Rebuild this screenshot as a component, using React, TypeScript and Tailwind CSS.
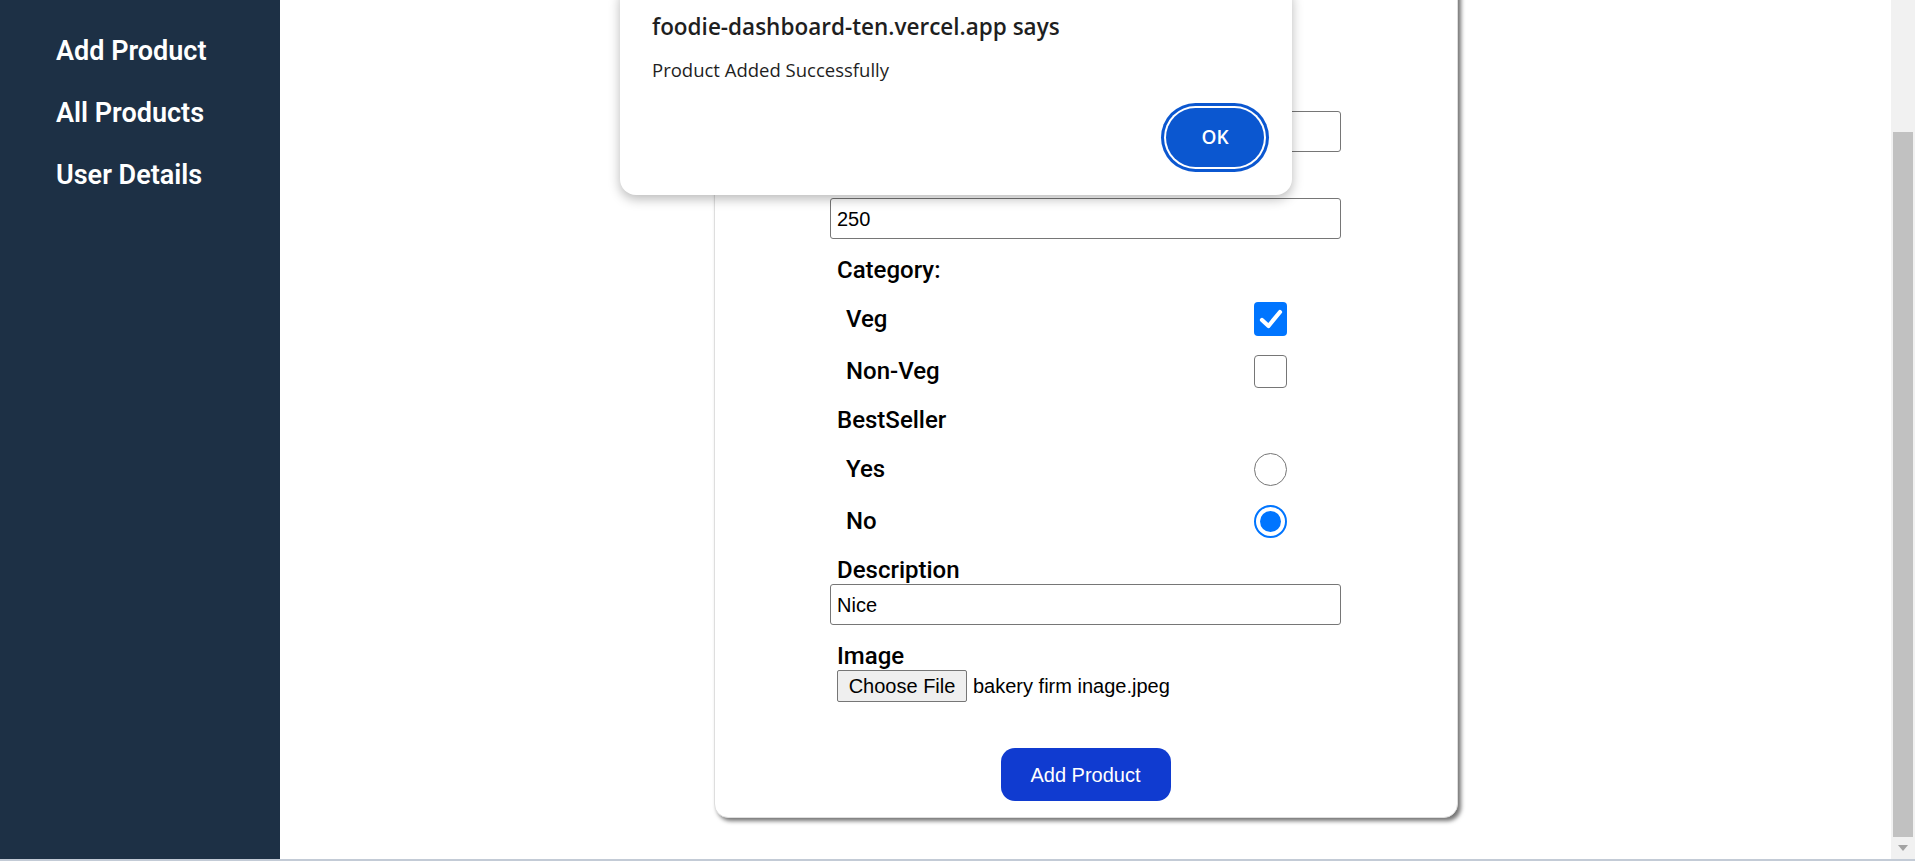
import React from "react";

const labelFont = { fontFamily: "Roboto, 'Liberation Sans', sans-serif" };

function Label({ children, className = "" }: { children: React.ReactNode; className?: string }) {
  return (
    <div
      className={`h-[28px] leading-[28px] pl-[7px] text-[24px] font-medium text-black font-['Roboto',sans-serif] ${className}`}
    >
      {children}
    </div>
  );
}

function TextInput({ value }: { value: string }) {
  return (
    <div className="h-[41px] w-full border border-[#767676] rounded-[3px] bg-white flex items-center pl-[6px] text-[20px] text-black font-['Liberation_Sans',Arial,sans-serif]">
      {value}
    </div>
  );
}

function Checkbox({ checked }: { checked: boolean }) {
  if (checked) {
    return (
      <div className="w-[33px] h-[34px] rounded-[4px] bg-[#0075ff] flex items-center justify-center">
        <svg width="24" height="22" viewBox="0 0 24 22">
          <path d="M3 12 L9.5 18 L21 4" fill="none" stroke="white" strokeWidth="4.2" strokeLinecap="round" strokeLinejoin="round" />
        </svg>
      </div>
    );
  }
  return <div className="w-[33px] h-[33px] rounded-[4px] border-[1.5px] border-[#767676] bg-white" />;
}

function Radio({ checked }: { checked: boolean }) {
  if (checked) {
    return (
      <div className="w-[33px] h-[33px] rounded-full border-2 border-[#0075ff] bg-white flex items-center justify-center">
        <div className="w-[21px] h-[21px] rounded-full bg-[#0075ff]" />
      </div>
    );
  }
  return <div className="w-[33px] h-[33px] rounded-full border-[1.5px] border-[#767676] bg-white" />;
}

function OptionRow({ label, children, className = "" }: { label: string; children: React.ReactNode; className?: string }) {
  return (
    <div className={`h-[34px] flex items-center justify-between pl-[16px] pr-[54px] ${className}`}>
      <span className="text-[24px] font-medium text-black font-['Roboto',sans-serif]">{label}</span>
      {children}
    </div>
  );
}

export default function App() {
  return (
    <div className="relative w-[1915px] h-[861px] overflow-hidden flex flex-col bg-white" style={labelFont}>
      <div className="flex flex-1 min-h-0">
        <aside className="w-[280px] shrink-0 bg-[#1d3045]">
          <ul className="pt-[20px]">
            {["Add Product", "All Products", "User Details"].map((t) => (
              <li
                key={t}
                className="h-[62px] flex items-center pl-[56px] text-[27px] font-semibold text-white font-['Roboto',sans-serif]"
              >
                {t}
              </li>
            ))}
          </ul>
        </aside>

        <main className="flex-1 min-w-0 bg-white">
          <div className="w-[744px] mx-auto mt-[-40px] border border-[#dedede] rounded-[14px] bg-white shadow-[3px_3px_4px_rgba(0,0,0,0.55)] pt-[122px] pb-[16px]">
            <form className="w-[511px] mx-auto flex flex-col">
              <Label>Product Name</Label>
              <TextInput value="Cake" />
              <Label className="mt-[18px]">Price</Label>
              <TextInput value="250" />
              <Label className="mt-[17px]">Category:</Label>
              <OptionRow label="Veg" className="mt-[18px]">
                <Checkbox checked />
              </OptionRow>
              <OptionRow label="Non-Veg" className="mt-[18px]">
                <Checkbox checked={false} />
              </OptionRow>
              <Label className="mt-[18px]">BestSeller</Label>
              <OptionRow label="Yes" className="mt-[18px]">
                <Radio checked={false} />
              </OptionRow>
              <OptionRow label="No" className="mt-[18px]">
                <Radio checked />
              </OptionRow>
              <Label className="mt-[18px]">Description</Label>
              <TextInput value="Nice" />
              <Label className="mt-[17px]">Image</Label>
              <div className="h-[32px] pl-[7px] flex items-center font-['Liberation_Sans',Arial,sans-serif] text-[20px] text-black">
                <div className="h-[32px] w-[130px] border border-[#767676] rounded-[2px] bg-[#efefef] flex items-center justify-center">
                  Choose File
                </div>
                <span className="ml-[6px]">bakery firm inage.jpeg</span>
              </div>
              <div className="mt-[46px] flex justify-center">
                <div className="w-[170px] h-[53px] rounded-[14px] bg-[#103bd0] flex items-center justify-center text-white text-[20px] font-['Liberation_Sans',Arial,sans-serif]">
                  Add Product
                </div>
              </div>
            </form>
          </div>
        </main>

        <div className="w-[24px] shrink-0 bg-[#f1f1f1] flex flex-col">
          <div className="h-[132px]" />
          <div className="flex-1 mx-[2px] bg-[#c1c1c1]" />
          <div className="h-[22px] flex items-center justify-center">
            <svg width="10" height="6" viewBox="0 0 10 6">
              <path d="M0 0 L10 0 L5 6 Z" fill="#a3a3a3" />
            </svg>
          </div>
        </div>
      </div>
      <div className="h-[2px] bg-[#c3cbd6]" />

      <div className="absolute left-[620px] top-[-16px] w-[672px] h-[211px] bg-white rounded-[16px] shadow-[0_4px_12px_rgba(0,0,0,0.28)] font-['Open_Sans',sans-serif]">
        <div className="pt-[27px] pl-[32px] text-[22.5px] leading-[32px] font-semibold text-[#1f1f1f]">
          foodie-dashboard-ten.vercel.app says
        </div>
        <div className="mt-[14px] pl-[32px] text-[18.5px] leading-[26px] text-[#1f1f1f]">
          Product Added Successfully
        </div>
        <div className="mt-[25px] pr-[28px] flex justify-end">
          <div className="w-[98px] h-[59px] rounded-full bg-[#0b57d0] shadow-[0_0_0_2px_white,0_0_0_5px_#0b57d0] flex items-center justify-center text-white text-[19px] font-semibold">
            OK
          </div>
        </div>
      </div>
    </div>
  );
}
